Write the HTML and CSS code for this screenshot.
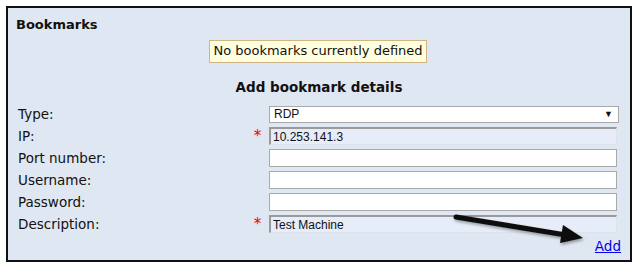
FILE: index.html
```html
<!DOCTYPE html>
<html lang="en">
  <head>
    <meta charset="UTF-8" />
    <title>Bookmarks</title>
    <link rel="stylesheet" href="styles.css">
  </head>
  <body>
    <div class="panel">
      <h2 class="panel-title">Bookmarks</h2>
      <div class="notice-row">
        <span class="notice">No bookmarks currently defined</span>
      </div>
      <h3 class="section-title">Add bookmark details</h3>
      <div class="form-grid">
        <label for="type">Type:</label>
        <span class="req"></span>
        <div class="select-box" id="type">
          <span>RDP</span>
          <span class="caret">&#9660;</span>
        </div>

        <label for="ip">IP:</label>
        <span class="req">*</span>
        <input type="text" id="ip" class="filled" value="10.253.141.3" />

        <label for="port">Port number:</label>
        <span class="req"></span>
        <input type="text" id="port" />

        <label for="username">Username:</label>
        <span class="req"></span>
        <input type="text" id="username" />

        <label for="password">Password:</label>
        <span class="req"></span>
        <input type="password" id="password" />

        <label for="description">Description:</label>
        <span class="req">*</span>
        <input type="text" id="description" class="filled" value="Test Machine" />
      </div>
      <div class="actions">
        <a href="#">Add</a>
      </div>

      <!-- annotation arrow pointing at the Add link -->
      <svg class="callout" width="160" height="50" viewBox="0 0 160 50">
        <defs>
          <filter id="shade" x="-20%" y="-50%" width="140%" height="200%">
            <feDropShadow dx="1" dy="2" stdDeviation="1.5" flood-color="#000" flood-opacity="0.35" />
          </filter>
        </defs>
        <g filter="url(#shade)">
          <line x1="8" y1="9" x2="118" y2="27" stroke="#111" stroke-width="5" stroke-linecap="round" />
          <polygon points="115,17 135,30 112,35" fill="#111" />
        </g>
      </svg>
    </div>
  </body>
</html>
```

FILE: styles.css
```css
body {
  margin: 0;
  background: #fff;
  font-family: "DejaVu Sans", Verdana, sans-serif;
  font-size: 13px;
  color: #111;
}
.panel {
  position: relative;
  margin: 6px 0 0 6px;
  width: 622px;
  height: 252px;
  border: 2px solid #111;
  background: #dfe7f2;
}
.panel-title {
  margin: 0;
  padding: 9px 0 0 8px;
  font-size: 13px;
  font-weight: bold;
  line-height: 16px;
}
.notice-row {
  text-align: center;
  margin-top: 7px;
  padding-right: 2px;
}
.notice {
  display: inline-block;
  padding: 2px 3px 3px;
  background: #ffffe0;
  border: 1px solid #d0b484;
  line-height: 16px;
}
.section-title {
  margin: 15px 0 0 0;
  text-align: center;
  font-size: 13.5px;
  font-weight: bold;
  line-height: 18px;
}
.form-grid {
  display: grid;
  grid-template-columns: 226px 25px 350px;
  row-gap: 4px;
  margin: 9px 0 0 10px;
  align-items: center;
}
.form-grid label {
  font-size: 13.5px;
  line-height: 18px;
}
.req {
  color: #e00;
  font-size: 15px;
  text-align: center;
  padding-left: 2px;
  line-height: 18px;
}
.form-grid input,
.select-box {
  box-sizing: border-box;
  height: 18px;
  width: 348px;
  margin: 0;
  padding: 0 2px;
  font-family: "Liberation Sans", Arial, sans-serif;
  font-size: 12px;
  color: #111;
  background: #fff;
  border: 1px solid #a9a9a9;
}
.form-grid input.filled {
  background: #e6edf9;
  border-top: 2px solid #9a9a9a;
  border-left: 2px solid #9a9a9a;
  border-right: 1px solid #dde3ec;
  border-bottom: 1px solid #dde3ec;
}
.select-box {
  display: flex;
  justify-content: space-between;
  align-items: center;
  width: 350px;
  height: 17px;
  padding: 0 5px 0 4px;
}
.caret {
  font-size: 9px;
}
.actions {
  text-align: right;
  margin: 5px 9px 0 0;
}
.actions a {
  color: #0000ee;
  font-size: 13.5px;
}
.callout {
  position: absolute;
  left: 440px;
  top: 200px;
}
```
